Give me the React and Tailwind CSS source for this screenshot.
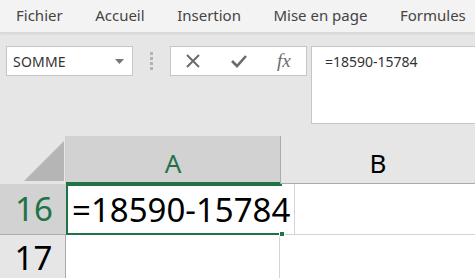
import React from 'react';

const menuItems = ['Fichier', 'Accueil', 'Insertion', 'Mise en page', 'Formules'];

const App = () => {
    return (
        <div className="w-[475px] h-[278px] overflow-hidden bg-[#e6e6e6] flex flex-col" style={{ fontFamily: '"Noto Sans", "Open Sans", sans-serif' }}>
            {/* Ribbon tabs */}
            <div className="h-[33px] shrink-0 bg-[#f3f3f3] flex items-center gap-[32.5px] pl-[16px] pb-[2px] text-[15px] text-[#444] border-b border-[#dadada] shadow-[0_1px_2px_rgba(0,0,0,0.08)]">
                {menuItems.map((item) => (
                    <span key={item} className="whitespace-nowrap">{item}</span>
                ))}
            </div>

            {/* Name box + formula bar */}
            <div className="h-[103px] shrink-0 flex items-start pt-[13px] pl-[6px]">
                <div className="w-[127px] h-[30px] bg-white border border-[#c6c6c6] flex items-center justify-between pl-[6px] pr-[8px]">
                    <span className="text-[14px] text-[#333] tracking-[0.2px]">SOMME</span>
                    <svg width="9" height="5" viewBox="0 0 9 5"><path d="M0 0h9L4.5 5z" fill="#777" /></svg>
                </div>
                <div className="w-[37px] h-[30px] flex items-center justify-center">
                    <div className="flex flex-col gap-[2px]">
                        <span className="w-[3px] h-[3px] bg-[#b3b3b3]" />
                        <span className="w-[3px] h-[3px] bg-[#b3b3b3]" />
                        <span className="w-[3px] h-[3px] bg-[#b3b3b3]" />
                        <span className="w-[3px] h-[3px] bg-[#b3b3b3]" />
                    </div>
                </div>
                <div className="w-[137px] h-[30px] bg-white border border-[#c6c6c6] flex items-center pl-[14px] gap-[29px]">
                    <svg width="16" height="16" viewBox="0 0 16 16"><path d="M2 2l12 12M14 2L2 14" stroke="#6b6b6b" strokeWidth="2" /></svg>
                    <svg width="18" height="16" viewBox="0 0 18 16"><path d="M2 8l5 5L16 3" stroke="#6b6b6b" strokeWidth="2.6" fill="none" /></svg>
                    <span className="text-[19px] italic text-[#6b6b6b] leading-none pb-[2px]" style={{ fontFamily: '"Liberation Serif", serif' }}>fx</span>
                </div>
                <div className="ml-[4px] flex-1 h-[78px] bg-white border border-[#c6c6c6] border-r-0 pl-[13px] pt-[2px]">
                    <span className="text-[14px] text-[#333]">=18590-15784</span>
                </div>
            </div>

            {/* Column headers */}
            <div className="h-[48px] shrink-0 flex">
                <div className="w-[66px] h-full relative border-r border-[#d0d0d0]">
                    <svg className="absolute left-0 top-0" width="66" height="48" viewBox="0 0 66 48">
                        <path d="M24 45L64 45L64 5z" fill="#b5b5b5" />
                    </svg>
                </div>
                <div className="w-[214px] h-full bg-[#d2d2d2] border-b-2 border-[#217346] flex items-center justify-center pt-[8px] text-[26px] text-[#217346]">
                    A
                </div>
                <div className="w-px h-full bg-[#ababab]" />
                <div className="flex-1 h-full border-b border-[#ababab] flex items-center justify-center pt-[8px] text-[26px] text-black">
                    B
                </div>
            </div>

            {/* Row 16 */}
            <div className="h-[51px] shrink-0 flex bg-white">
                <div className="w-[66px] h-full bg-[#d2d2d2] border-b border-[#ababab] flex items-center justify-center pl-[2px] text-[33px] text-[#217346]">
                    16
                </div>
                <div className="w-[216px] h-full relative border-2 border-r-0 border-[#217346] flex items-center pl-[4px]">
                    <span className="text-[33px] text-black whitespace-nowrap leading-none">=18590-15784</span>
                    <span className="absolute right-[-3px] bottom-[-4px] w-[6px] h-[6px] bg-[#217346] border border-white" />
                </div>
                <div className="w-[12px] h-full border-b border-[#d4d4d4]" />
                <div className="flex-1 h-full border-l border-b border-[#d4d4d4]" />
            </div>

            {/* Row 17 */}
            <div className="flex-1 flex bg-white">
                <div className="w-[66px] h-full bg-[#e6e6e6] border-r border-[#ababab] flex items-start justify-center pl-[2px] pt-[6px] text-[33px] text-black leading-none">
                    17
                </div>
                <div className="w-[214px] h-full border-r border-[#d4d4d4]" />
                <div className="flex-1 h-full" />
            </div>
        </div>
    );
};

export default App;
